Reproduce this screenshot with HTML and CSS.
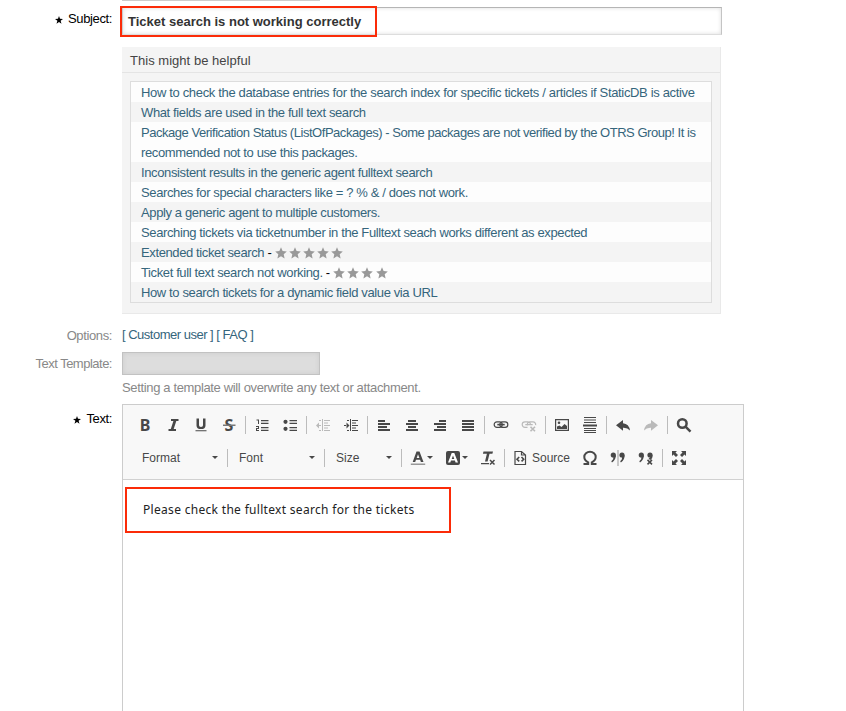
FILE: index.html
```html
<!DOCTYPE html>
<html lang="en">
<head>
<meta charset="utf-8">
<title>New ticket</title>
<link rel="stylesheet" href="styles.css">
</head>
<body>
<svg class="defs" aria-hidden="true">
  <symbol id="star" viewBox="0 0 12 12"><path d="M6 .2 7.6 4 11.8 4.4 8.7 7.2 9.6 11.4 6 9.2 2.4 11.4 3.3 7.2.2 4.4 4.4 4z"/></symbol>
  <symbol id="req" viewBox="0 0 8 8"><path d="M4 0 5 2.8 8 2.9 5.6 4.7 6.5 7.7 4 6 1.5 7.7 2.4 4.7 0 2.9 3 2.8z"/></symbol>
</svg>
<main class="form">
  <div class="field-row previous"><span class="label"></span><div class="field previous-end"></div></div>
  <div class="field-row subject">
    <span class="label required"><svg class="req"><use href="#req"/></svg>Subject:</span>
    <div class="field">
      <div class="input"><b>Ticket search is not working correctly</b><i class="mark mark-subject"></i></div>
      <section class="helpbox">
        <h2>This might be helpful</h2>
        <ul>
          <li><a class="loose">How to check the database entries for the search index for specific tickets / articles if StaticDB is active</a></li>
          <li><a>What fields are used in the full text search</a></li>
          <li><a><span class="tight">Package Verification Status (ListOfPackages) - Some packages are not verified by the OTRS Group! It is</span><br>recommended not to use this packages.</a></li>
          <li><a>Inconsistent results in the generic agent fulltext search</a></li>
          <li><a>Searches for special characters like = ? % &amp; / does not work.</a></li>
          <li><a>Apply a generic agent to multiple customers.</a></li>
          <li><a>Searching tickets via ticketnumber in the Fulltext seach works different as expected</a></li>
          <li><a>Extended ticket search</a> - <span class="stars"><svg><use href="#star"/></svg><svg><use href="#star"/></svg><svg><use href="#star"/></svg><svg><use href="#star"/></svg><svg><use href="#star"/></svg></span></li>
          <li><a>Ticket full text search not working.</a> - <span class="stars"><svg><use href="#star"/></svg><svg><use href="#star"/></svg><svg><use href="#star"/></svg><svg><use href="#star"/></svg></span></li>
          <li><a>How to search tickets for a dynamic field value via URL</a></li>
        </ul>
      </section>
    </div>
  </div>
  <div class="field-row options">
    <span class="label muted">Options:</span>
    <div class="field links"><a>[ Customer user ]</a> <a>[ FAQ ]</a></div>
  </div>
  <div class="field-row template">
    <span class="label muted">Text Template:</span>
    <div class="field"><div class="select"></div><p class="hint">Setting a template will overwrite any text or attachment.</p></div>
  </div>
  <div class="field-row text">
    <span class="label required"><svg class="req"><use href="#req"/></svg>Text:</span>
    <div class="editor">
      <div class="toolbar">
        <div class="tools">
          <span class="btn glyph">B</span>
          <span class="btn"><svg class="ic"><path d="M6 2h7.500v2h-2.200L8.700 12H11v2H3.500v-2h2.300L8.400 4H6z"/></svg></span>
          <span class="btn"><svg class="ic"><path d="M3.500 1.500h2.500v6.700Q6 10 8 10t2-1.800V1.500h2.500v6.900Q12.500 12 8 12T3.500 8.400zM2.500 13.200h11v1.100h-11z"/></svg></span>
          <span class="btn"><svg class="ic strike"><text x="3.500" y="13.800">S</text><path class="grey" d="M2 7.500h12.500v1.500H2z"/></svg></span>
          <i class="sep"></i>
          <span class="btn"><svg class="ic"><path d="M7 3h7.500v1.200H7zM7 5.800h7.500V7H7zM7 10h7.500v1.200H7zM7 12.800h7.500V14H7zM2.500 2.500H5V7H4V3.500H2.500zM2 9h3v3H3v1h2v1H2v-3h2v-1H2z"/></svg></span>
          <span class="btn"><svg class="ic"><circle cx="3.500" cy="4.800" r="2.100"/><circle cx="3.500" cy="11.800" r="2.100"/><path d="M7.500 3H15v1.200H7.500zM7.500 5.800H15V7H7.500zM7.500 10H15v1.200H7.500zM7.500 12.800H15V14H7.500z"/></svg></span>
          <i class="sep"></i>
          <span class="btn off"><svg class="ic"><path d="M7 2h1v12H7zM9 3h6v1H9zM9 5.500h4v1H9zM9 8h6v1H9zM9 10.500h4v1H9zM9 13h6v1H9zM4 5.500v6L1 8.500zM4 8h2v1H4zM4 3h2v1H4zM4 13h2v1H4z"/></svg></span>
          <span class="btn"><svg class="ic"><path d="M7 2h1v12H7zM9 3h6v1H9zM9 5.500h4v1H9zM9 8h6v1H9zM9 10.500h4v1H9zM9 13h6v1H9zM3.500 5.500v6L6.500 8.500zM1 8h3v1H1zM4 3h2v1H4zM4 13h2v1H4z"/></svg></span>
          <i class="sep"></i>
          <span class="btn"><svg class="ic"><path d="M2 3h7v2H2zM2 6h12v2H2zM2 9h9v2H2zM2 12h12v2H2z"/></svg></span>
          <span class="btn"><svg class="ic"><path d="M4 3h8v2H4zM2 6h12v2H2zM4 9h8v2H4zM2 12h12v2H2z"/></svg></span>
          <span class="btn"><svg class="ic"><path d="M7 3h7v2H7zM2 6h12v2H2zM5 9h9v2H5zM2 12h12v2H2z"/></svg></span>
          <span class="btn"><svg class="ic"><path d="M2 3h12v2H2zM2 6h12v2H2zM2 9h12v2H2zM2 12h12v2H2z"/></svg></span>
          <i class="sep"></i>
          <span class="btn"><svg class="ic line"><rect x="1.200" y="4.800" width="8" height="5.600" rx="2.700"/><rect x="6.800" y="4.800" width="8" height="5.600" rx="2.700"/><path class="thick" d="M4.300 7.600h7.400"/></svg></span>
          <span class="btn off"><svg class="ic line"><path d="M6.500 10.400H4a2.700 2.700 0 0 1 0-5.600H7a2.700 2.700 0 0 1 2.500 2M6.500 8.500A2.700 2.700 0 0 1 9 4.800h3a2.700 2.700 0 0 1 2.600 3.300M4.300 7.600h7.400"/><path class="thick" d="m9.500 9.700 4.500 4.500m0-4.500-4.500 4.500"/></svg></span>
          <i class="sep"></i>
          <span class="btn"><svg class="ic"><path fill-rule="evenodd" d="M1 2h14v12H1zM2.200 3.200v9.600h11.600V3.200zM3 12V9.500L5.500 8.500l2 1.500L10.500 7 13 9v3z"/><circle cx="5" cy="5.800" r="1.300"/></svg></span>
          <span class="btn"><svg class="ic"><path d="M2 0h12v1H2zM2 2.500h12v1H2zM2 5h12v1H2zM1 7.500h14v2H1zM2 11h12v1H2zM2 13h12v1H2zM2 15h12v1H2z"/></svg></span>
          <i class="sep"></i>
          <span class="btn"><svg class="ic"><path d="M1 8.200 8 3v3.200q6 .5 7 7.300-2.500-3-7-2.700v3z"/></svg></span>
          <span class="btn off"><svg class="ic"><path d="M15 8.200 8 3v3.200q-6 .5-7 7.300 2.500-3 7-2.700v3z"/></svg></span>
          <i class="sep"></i>
          <span class="btn"><svg class="ic line find"><circle cx="6.300" cy="6.500" r="4.300"/><path d="m9.500 9.700 5 5"/></svg></span>
        </div>
        <div class="tools">
          <span class="combo format">Format<i class="caret"></i></span>
          <i class="sep"></i>
          <span class="combo font">Font<i class="caret"></i></span>
          <i class="sep"></i>
          <span class="combo size">Size<i class="caret"></i></span>
          <i class="sep"></i>
          <span class="btn drop"><svg class="ic"><path fill-rule="evenodd" d="M6.500 1.500h3L13.500 12h-2.600l-.8-2.200H6L5.200 12H2.700zM8 4.300 6.700 8h2.700z"/><path class="grey" d="M.8 13.500h14.400V15H.8z"/></svg><i class="caret"></i></span>
          <span class="btn drop"><svg class="ic"><rect x="1" y="1" width="14" height="14" rx="2"/><path class="white" fill-rule="evenodd" d="M6.700 3h2.600L13 12.500h-2.400L9.900 10.500H6l-.7 2H3zM8 5.500 6.700 9h2.600z"/></svg><i class="caret"></i></span>
          <span class="btn"><svg class="ic"><path d="M3.500 1.500h9.500l-.6 2.300h-2.900L7.600 11.500H5L6.900 3.800h-4zM1 13h8v1.200H1z"/><path class="cross" d="m10 10 4.500 4.500m0-4.500L10 14.500"/></svg></span>
          <i class="sep"></i>
          <span class="btn source"><svg class="ic line"><path d="M3 1.500h6.500L13.500 5v9.500H3zM9.500 1.500V5h4"/><path class="thick" d="M7.200 7 5 9.200l2.200 2.200M9.500 7l2.200 2.200-2.200 2.200"/></svg><span>Source</span></span>
          <span class="btn"><svg class="ic line omega"><path d="M1.500 14h4.700v-1.700C3.500 11 2.300 9.500 2.300 7a5.700 5.200 0 0 1 11.400 0c0 2.500-1.200 4-3.900 5.300V14h4.700"/></svg></span>
          <span class="btn"><svg class="ic"><circle cx="3.300" cy="5" r="2.600"/><path d="M3.300 7.200 5.900 5Q6 10 2 12.500L1.300 11.300Q4 9 3.300 7.200z"/><circle cx="12" cy="5" r="2.600"/><path d="M12 7.200 14.600 5q.3 5-3.700 7.500l-.7-1.200Q12.700 9 12 7.200z"/><path class="grey" d="M7.500 0h1v16h-1z"/></svg></span>
          <span class="btn"><svg class="ic"><circle cx="3.300" cy="5" r="2.600"/><path d="M3.300 7.200 5.900 5Q6 10 2 12.500L1.300 11.300Q4 9 3.300 7.200z"/><circle cx="12" cy="5" r="2.600"/><path d="M12 7.200 14.600 5q.3 3-2 5l-2-1z"/><path class="cross" d="m9.500 9.900 4.500 4.500m0-4.500-4.500 4.500"/></svg></span>
          <i class="sep"></i>
          <span class="btn"><svg class="ic"><path d="M1 1h5L4.500 2.500 7 5 5 7 2.500 4.500 1 6zM15 1v5l-1.500-1.500L11 7 9 5l2.500-2.500L10 1zM1 15v-5l1.500 1.500L5 9l2 2-2.500 2.500L6 15zM15 15h-5l1.500-1.500L9 11l2-2 2.500 2.500L15 10z"/></svg></span>
        </div>
      </div>
      <div class="content">Please check the fulltext search for the tickets<i class="mark mark-content"></i></div>
    </div>
  </div>
</main>
</body>
</html>
```
FILE: styles.css
```css
* { box-sizing: border-box; }
html, body { margin: 0; height: 711px; overflow: hidden; background: #fff; }
body { font: 13px/20px "Liberation Sans", Arial, sans-serif; letter-spacing: -0.38px; color: #000; }
.defs { display: none; }
.form { display: flex; flex-direction: column; }
.field-row { display: grid; grid-template-columns: 112px 1fr; column-gap: 10px; align-items: start; flex: none; }
.label { display: flex; justify-content: flex-end; align-items: center; height: 20px; color: #000; }
.muted { color: #888; }
.req { width: 8px; height: 8px; margin: 1px 5px 0 0; }
.previous { height: 7px; }
.previous .label { height: 0; }
.previous-end { width: 198px; height: 1px; background: #ccc; }
.subject .label { margin-top: 2px; }
.input { position: relative; width: 600px; height: 28px; padding: 0 5px; border: 1px solid #bbb; border-color: #b5b5b5 #c4c4c4 #ddd #ccc; box-shadow: inset 0 0 4px #ddd; line-height: 27px; letter-spacing: 0; color: #333; }
.mark { position: absolute; border: 2px solid #fb2b08; }
.mark-subject { left: -3px; top: -2px; width: 257px; height: 31px; }
.helpbox { width: 599px; height: 267px; margin-top: 12px; padding: 0 8px; background: #f4f4f4; border: 1px solid #e9e9e9; border-width: 0 1px 1px 0; }
.helpbox h2 { margin: 0 -8px 8px; height: 26px; padding: 0 8px; border-bottom: 1px solid #e4e4e4; font-size: 13px; font-weight: normal; line-height: 27px; letter-spacing: 0.03px; color: #444; }
.helpbox ul { width: 582px; margin: 0; padding: 0; list-style: none; border: 1px solid #ddd; }
.helpbox li { padding: 1px 0 0 10px; margin-bottom: -1px; background: #fdfdfd; white-space: nowrap; line-height: 20px; }
.helpbox li:last-child { margin-bottom: 0; height: 20px; }
.helpbox li:nth-child(even) { background: #f4f4f4; }
a { color: #35657c; }
.loose { letter-spacing: -0.34px; }
.tight { letter-spacing: -0.465px; }
.stars { display: inline-flex; gap: 2.2px; vertical-align: -2px; }
.stars svg { width: 12px; height: 12px; fill: #999; }
.options { height: 24px; margin-top: 11px; }
.options .label { margin-top: 1px; }
.links { letter-spacing: -0.5px; }
.template { height: 55px; margin-top: 3px; }
.template .label { margin-top: 2px; letter-spacing: -0.5px; }
.select { width: 198px; height: 23px; border: 1px solid #c2c2c2; background: #ddd; box-shadow: inset 0 0 5px #ccc; }
.hint { margin: 3px 0 0; letter-spacing: -0.35px; color: #888; }
.text { margin-top: -3px; }
.text .label { margin-top: 5px; }
.editor { width: 622px; height: 320px; border: 1px solid #ccc; }
.toolbar { height: 75px; padding: 3px 8px 0; border-bottom: 1px solid #d1d1d1; background: #f8f8f8; }
.tools { display: flex; align-items: center; height: 33px; }
.btn { display: flex; align-items: center; justify-content: center; width: 28px; height: 28px; flex: none; color: #484848; }
.glyph { font: bold 16px/28px "Noto Sans", sans-serif; }
.ic { width: 16px; height: 16px; fill: #484848; flex: none; overflow: visible; }
.strike { font: bold 16px "Noto Sans", sans-serif; }
.line { fill: none; stroke: #484848; stroke-width: 1.2; }
.thick { stroke-width: 1.6; }
.find { stroke-width: 2.5; }
.omega { stroke-width: 2; }
.cross { fill: none; stroke: #484848; stroke-width: 1.5; }
.grey { fill: #999; }
.strike .grey { fill: #777; }
.white { fill: #fff; }
.off { opacity: .35; }
.sep { width: 1px; height: 18px; margin: 0 2px; background: #bcbcbc; flex: none; }
.combo { display: flex; align-items: center; justify-content: space-between; padding: 0 7px 0 9px; font-size: 12px; letter-spacing: 0; color: #484848; }
.format { width: 94px; padding-left: 11px; }
.font { width: 92px; }
.size { width: 72px; }
.caret { border: 3px solid transparent; border-top-color: #484848; border-bottom: 0; }
.drop { width: 35px; gap: 1px; padding-right: 1px; }
.source { width: 69px; gap: 4px; padding-right: 1px; font-size: 12px; letter-spacing: 0; }
.content { position: relative; padding: 20px; font: 12px/20px "Noto Sans", sans-serif; letter-spacing: 0.31px; color: #222; }
.mark-content { left: 2px; top: 7px; width: 326px; height: 46px; }
```
